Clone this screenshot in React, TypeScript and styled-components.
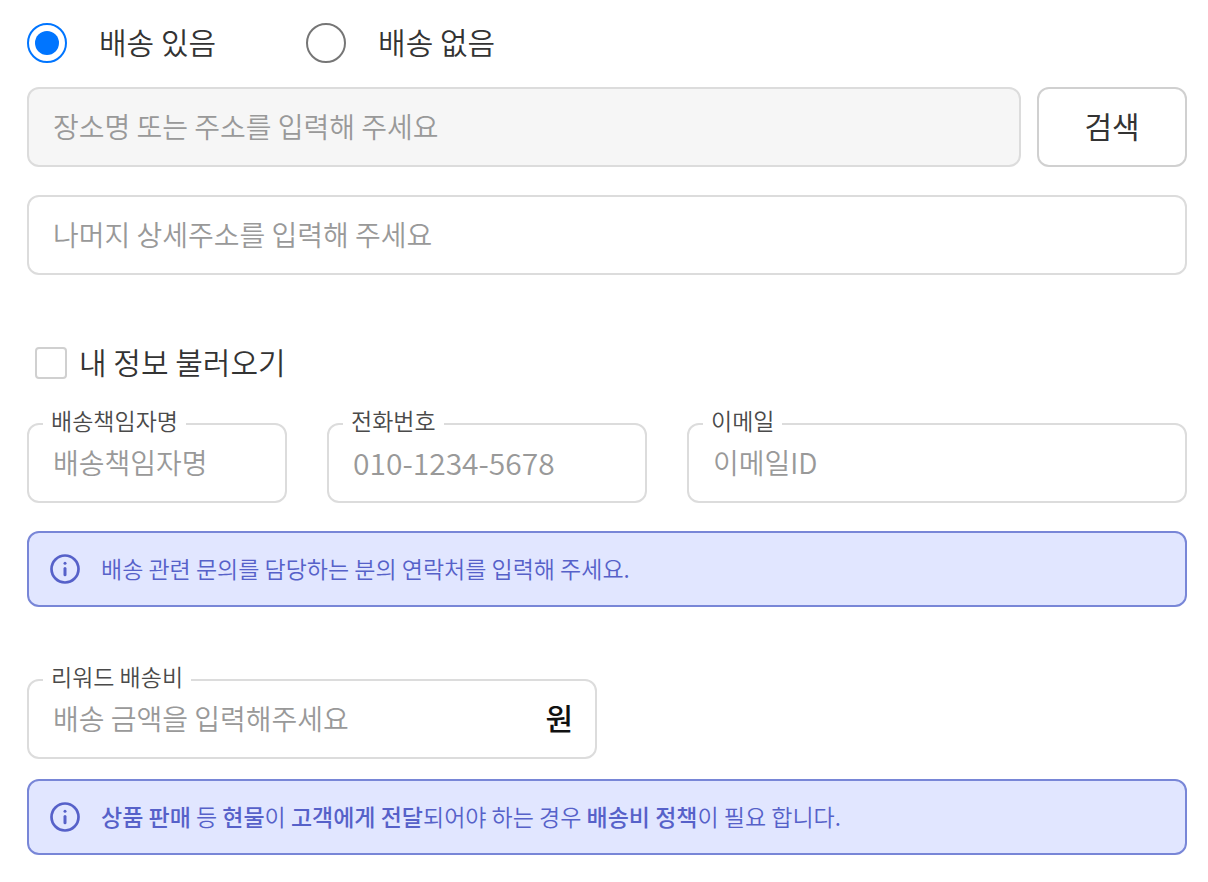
import React, { useState } from 'react';
import styled, { createGlobalStyle } from 'styled-components';

const GlobalStyle = createGlobalStyle`
  *, *::before, *::after { box-sizing: border-box; }
  body {
    margin: 0;
    background: #fff;
    color: #333;
    font-family: "Noto Sans CJK KR", "Noto Sans", sans-serif;
  }
`;

const Form = styled.form`
  display: flex;
  flex-direction: column;
  padding: 23px 21px 27px 27px;
`;

const RadioGroup = styled.div`
  display: flex;
  gap: 90px;
  margin-bottom: 24px;
`;

const ChoiceLabel = styled.label<{ $gap: number }>`
  display: flex;
  align-items: center;
  gap: ${(p) => p.$gap}px;
  height: 40px;
`;

const ChoiceText = styled.span`
  padding-bottom: 4px;
  font-size: 30px;
  font-weight: 350;
  line-height: 40px;
`;

const Radio = styled.input`
  appearance: none;
  display: grid;
  place-items: center;
  width: 40px;
  height: 40px;
  margin: 0;
  border: 2px solid #767676;
  border-radius: 50%;
  background: #fff;

  &:checked { border-color: #0075ff; }
  &:checked::before {
    content: "";
    width: 24px;
    height: 24px;
    border-radius: 50%;
    background: #0075ff;
  }
`;

const Checkbox = styled.input`
  appearance: none;
  width: 32px;
  height: 32px;
  margin: 0;
  border: 2px solid #d0d0d0;
  border-radius: 4px;
  background: #fff;

  &:checked { border-color: #0075ff; background: #0075ff; }
`;

const SearchRow = styled.div`
  display: flex;
  gap: 16px;
  margin-bottom: 28px;
`;

const TextInput = styled.input<{ $size?: number }>`
  display: block;
  width: 100%;
  min-width: 0;
  height: 80px;
  padding: 0 24px 2px;
  border: 2px solid #dcdcdc;
  border-radius: 12px;
  background: #fff;
  color: #333;
  font-family: inherit;
  font-size: ${(p) => p.$size ?? 28}px;
  font-weight: 350;

  &:read-only { background: #f6f6f6; }
  &::placeholder { color: #999; opacity: 1; }
`;

const SearchButton = styled.button`
  flex: none;
  width: 150px;
  height: 80px;
  padding: 0 0 4px;
  border: 2px solid #d0d0d0;
  border-radius: 12px;
  background: #fff;
  color: #333;
  font-family: inherit;
  font-size: 30px;
  font-weight: 400;
`;

const LoadRow = styled.div`
  display: flex;
  margin: 68px 0 40px;
  padding-left: 8px;
`;

const ContactRow = styled.div`
  display: grid;
  grid-template-columns: 260px 320px minmax(0, 1fr);
  gap: 40px;
`;

const FieldBox = styled.div`
  position: relative;
`;

const FloatingLabel = styled.label`
  position: absolute;
  top: -19px;
  left: 16px;
  padding: 0 8px;
  background: #fff;
  color: #4a4a4a;
  font-size: 23px;
  font-weight: 350;
  line-height: 32px;
`;

const RewardBox = styled(FieldBox)`
  width: calc(50% - 10px);
  margin-top: 72px;
`;

const Unit = styled.span`
  position: absolute;
  top: 0;
  right: 24px;
  color: #111;
  font-size: 30px;
  font-weight: 500;
  line-height: 76px;
`;

const NoticeBox = styled.div<{ $top: number }>`
  display: flex;
  align-items: center;
  gap: 20px;
  min-height: 76px;
  margin-top: ${(p) => p.$top}px;
  padding: 12px 20px;
  border: 2px solid #7886d7;
  border-radius: 12px;
  background: #e1e6ff;
  color: #5661c9;
`;

const NoticeText = styled.p`
  margin: 0;
  padding-bottom: 2px;
  font-size: 23px;
  font-weight: 350;
  line-height: 32px;

  strong { font-weight: 500; }
`;

const InfoSvg = styled.svg`
  flex: none;
  width: 32px;
  height: 32px;
`;

function InfoIcon() {
  return (
    <InfoSvg viewBox="0 0 32 32" fill="none" aria-hidden="true">
      <circle cx="16" cy="16" r="13.5" stroke="currentColor" strokeWidth="2.7" />
      <circle cx="16" cy="10.2" r="1.5" fill="currentColor" />
      <path d="M16 15.4v6.4" stroke="currentColor" strokeWidth="3" strokeLinecap="round" />
    </InfoSvg>
  );
}

interface NoticeProps {
  top: number;
  children: React.ReactNode;
}

function Notice({ top, children }: NoticeProps) {
  return (
    <NoticeBox $top={top}>
      <InfoIcon />
      <NoticeText>{children}</NoticeText>
    </NoticeBox>
  );
}

interface FieldProps {
  id: string;
  label: string;
  placeholder: string;
  type?: string;
  size?: number;
}

function Field({ id, label, placeholder, type = 'text', size }: FieldProps) {
  return (
    <FieldBox>
      <TextInput id={id} type={type} placeholder={placeholder} $size={size} />
      <FloatingLabel htmlFor={id}>{label}</FloatingLabel>
    </FieldBox>
  );
}

export default function App() {
  const [delivery, setDelivery] = useState('yes');

  return (
    <>
      <GlobalStyle />
      <Form onSubmit={(e) => e.preventDefault()}>
        <RadioGroup role="radiogroup" aria-label="배송 여부">
          <ChoiceLabel $gap={32}>
            <Radio type="radio" name="delivery" checked={delivery === 'yes'} onChange={() => setDelivery('yes')} />
            <ChoiceText>배송 있음</ChoiceText>
          </ChoiceLabel>
          <ChoiceLabel $gap={32}>
            <Radio type="radio" name="delivery" checked={delivery === 'no'} onChange={() => setDelivery('no')} />
            <ChoiceText>배송 없음</ChoiceText>
          </ChoiceLabel>
        </RadioGroup>

        <SearchRow>
          <TextInput readOnly aria-label="주소" placeholder="장소명 또는 주소를 입력해 주세요" />
          <SearchButton type="button">검색</SearchButton>
        </SearchRow>
        <TextInput aria-label="상세주소" placeholder="나머지 상세주소를 입력해 주세요" />

        <LoadRow>
          <ChoiceLabel $gap={12}>
            <Checkbox type="checkbox" />
            <ChoiceText>내 정보 불러오기</ChoiceText>
          </ChoiceLabel>
        </LoadRow>

        <ContactRow>
          <Field id="manager" label="배송책임자명" placeholder="배송책임자명" />
          <Field id="phone" label="전화번호" placeholder="010-1234-5678" type="tel" size={30} />
          <Field id="email" label="이메일" placeholder="이메일ID" />
        </ContactRow>
        <Notice top={28}>배송 관련 문의를 담당하는 분의 연락처를 입력해 주세요.</Notice>

        <RewardBox>
          <TextInput id="fee" inputMode="numeric" placeholder="배송 금액을 입력해주세요" />
          <FloatingLabel htmlFor="fee">리워드 배송비</FloatingLabel>
          <Unit>원</Unit>
        </RewardBox>
        <Notice top={20}>
          <strong>상품 판매</strong> 등 <strong>현물</strong>이 <strong>고객에게 전달</strong>되어야 하는 경우{' '}
          <strong>배송비 정책</strong>이 필요 합니다.
        </Notice>
      </Form>
    </>
  );
}
